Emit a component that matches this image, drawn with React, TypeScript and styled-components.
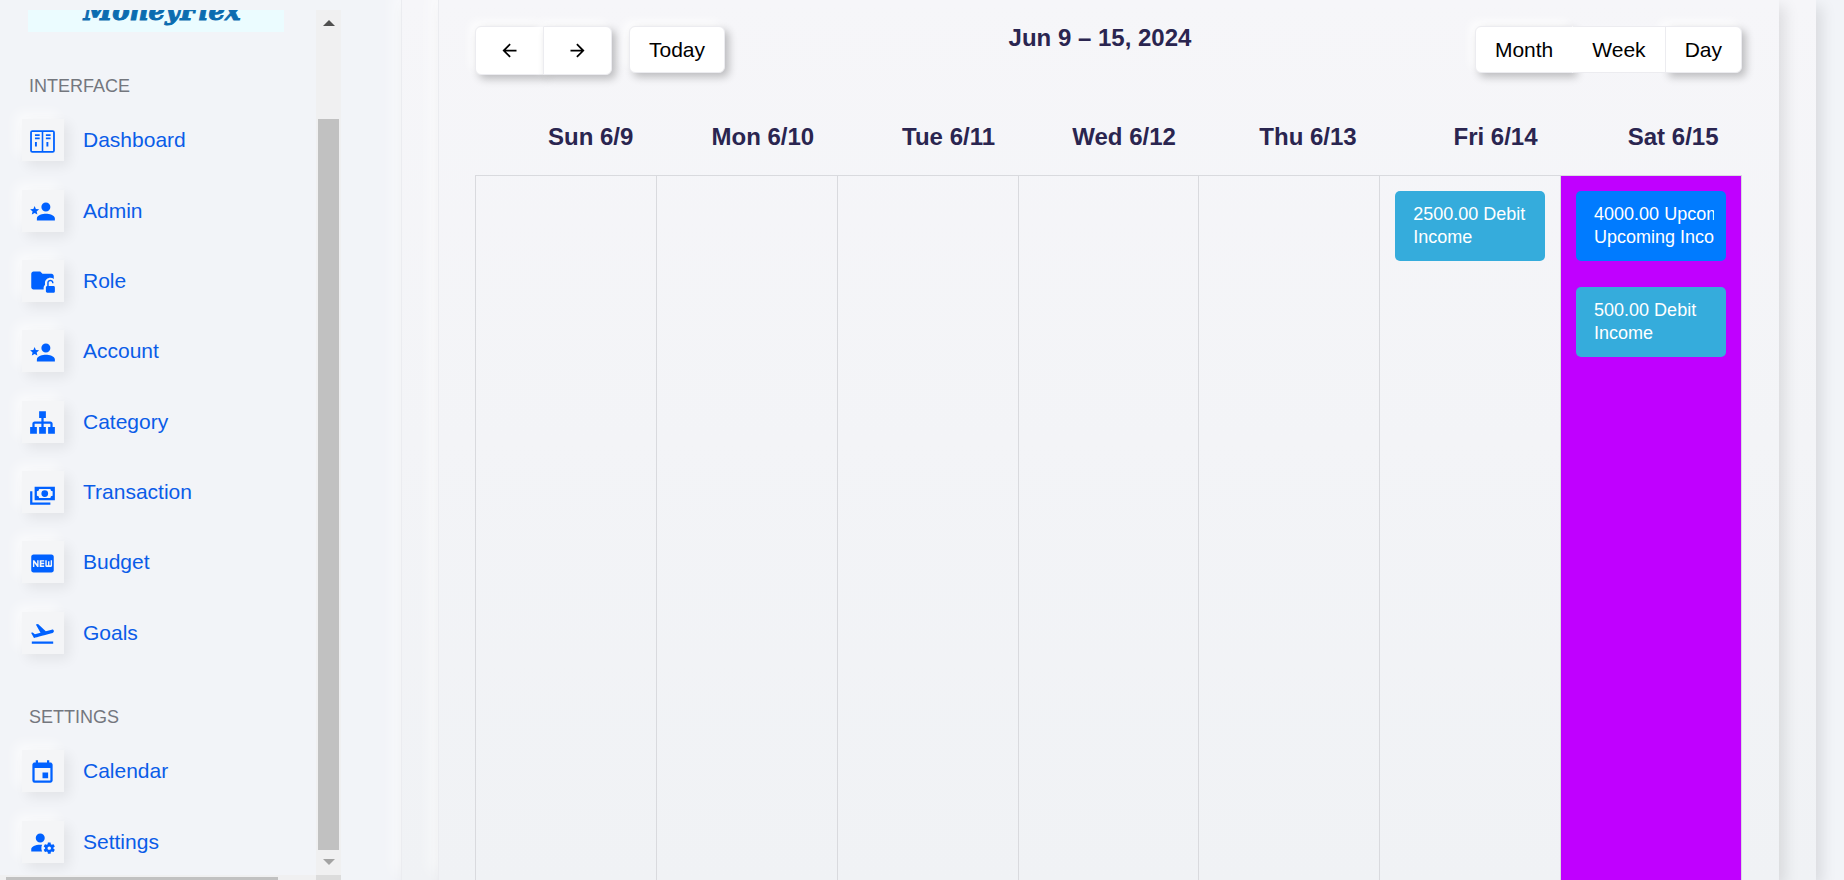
import React from "react";
import styled, { createGlobalStyle, css } from "styled-components";
import { MdArrowBack, MdArrowForward, MdEvent, MdFiberNew, MdFlightTakeoff } from "react-icons/md";

const GlobalStyle = createGlobalStyle`
  *, *::before, *::after { box-sizing: border-box; }
  body {
    margin: 0;
    background: #f2f4f8;
    color: #2a2550;
    font-family: "Liberation Sans", Arial, sans-serif;
    overflow: hidden;
  }
`;

const Page = styled.div`
  display: flex;
  height: 100vh;
  overflow: hidden;
`;

/* ---------- Sidebar ---------- */

const Sidebar = styled.aside`
  flex: none;
  width: 341px;
  padding-top: 10px;
  display: grid;
  grid-template-columns: minmax(0, 1fr) 25px;
  grid-template-rows: minmax(0, 1fr) 5px;
`;

const SidebarContent = styled.div`
  overflow: hidden;
  display: flex;
  flex-direction: column;
`;

const Logo = styled.a`
  flex: none;
  display: flex;
  align-items: flex-end;
  justify-content: center;
  width: 256px;
  height: 22px;
  margin: 0 0 42px 28px;
  padding-right: 12px;
  padding-left: 24px;
  overflow: hidden;
  background: #ebfcff;
  color: #0b6cb0;
  font: italic bold 26px/42px "DejaVu Serif", serif;
  -webkit-text-stroke: 1px #0b6cb0;
  text-decoration: none;
`;

const SectionTitle = styled.h2`
  flex: none;
  margin: 0;
  padding: 0 29px;
  color: #74777e;
  font-size: 18px;
  font-weight: 400;
  line-height: 24px;
  text-transform: uppercase;
`;

const NavList = styled.ul<{ $height: number }>`
  flex: none;
  display: grid;
  grid-auto-rows: 1fr;
  min-height: ${(p) => p.$height}px;
  margin: 7px 0 37px;
  padding: 0 0 0 22px;
  list-style: none;
`;

const NavLink = styled.a`
  display: flex;
  align-items: center;
  gap: 19px;
  height: 100%;
  color: #0a5ce8;
  font-size: 21px;
  text-decoration: none;
`;

const IconTile = styled.span`
  display: flex;
  align-items: center;
  justify-content: center;
  width: 42px;
  height: 42px;
  padding: 2px 2px 0 0;
  background: #f4f5f7;
  box-shadow: 5px 5px 12px rgba(0, 0, 0, 0.07), -6px -6px 12px rgba(255, 255, 255, 0.7);
  color: #0061ff;

  svg {
    width: 27px;
    height: 27px;
    fill: currentColor;
  }
`;

const VerticalBar = styled.div`
  display: flex;
  flex-direction: column;
  align-items: center;
  padding: 10px 0;
  background: #f0f0f1;
`;

const BarArrow = styled.span<{ $down?: boolean }>`
  width: 0;
  height: 0;
  border: 6px solid transparent;
  ${(p) =>
    p.$down
      ? css`border-top-color: #a3a3a3; border-bottom-width: 0;`
      : css`border-bottom-color: #505050; border-top-width: 0;`}
`;

const VerticalThumb = styled.div`
  flex: 1;
  width: 21px;
  margin: 93px 0 9px;
  background: #c1c1c1;
`;

const HorizontalBar = styled.div`
  padding: 2px 38px 0 6px;
  background: #f0f0f1;
`;

const HorizontalThumb = styled.div`
  height: 3px;
  background: #c1c1c1;
`;

const BarCorner = styled.div`
  background: #dcdcdc;
`;

/* ---------- Calendar ---------- */

const panel = css`
  background: linear-gradient(#f6f6f9, #f0f2f5);
  box-shadow: 6px 6px 14px rgba(0, 0, 0, 0.1), -8px -8px 14px rgba(255, 255, 255, 0.55);
`;

const Main = styled.main`
  flex: 1;
  min-width: 0;
  display: flex;
  padding: 0 28px 0 60px;
`;

const OuterCard = styled.div`
  flex: 1;
  min-width: 0;
  display: flex;
  padding: 0 37px 0 36px;
  border-left: 1px solid #ebecf0;
  ${panel}
`;

const CalendarCard = styled.section`
  flex: 1;
  min-width: 0;
  display: flex;
  flex-direction: column;
  padding: 26px 37px 0 36px;
  border-left: 1px solid #ebecf0;
  ${panel}
`;

const Toolbar = styled.header`
  display: flex;
  align-items: flex-start;
  justify-content: space-between;
  min-height: 82px;
`;

const ToolbarSide = styled.div`
  display: flex;
  align-items: flex-start;
  gap: 17px;
`;

const ButtonGroup = styled.div`
  display: flex;
`;

const Title = styled.h1`
  margin: 0;
  font-size: 24px;
  line-height: 24px;
`;

const Button = styled.button<{ $icon?: boolean; $active?: boolean }>`
  position: relative;
  z-index: ${(p) => (p.$active ? 1 : 0)};
  display: flex;
  align-items: center;
  height: ${(p) => (p.$icon ? 49 : 47)}px;
  padding: 0 ${(p) => (p.$icon ? 23 : 19)}px;
  border: 1px solid #ececf0;
  background: #fff;
  color: #000;
  font: 21px "Liberation Sans", Arial, sans-serif;
  box-shadow: 4px 4px 8px rgba(0, 0, 0, 0.24), -5px -5px 10px rgba(255, 255, 255, 0.8);

  &:first-child { border-radius: 6px 0 0 6px; }
  &:last-child { border-radius: 0 6px 6px 0; }
  &:only-child { border-radius: 6px; }
  & + & { margin-left: -1px; }

  ${(p) => p.$active && css`border-left-color: #fff; box-shadow: none;`}

  svg { width: 21px; height: 21px; }
`;

const WeekTable = styled.table`
  flex: 1;
  width: 100%;
  table-layout: fixed;
  border-collapse: collapse;
`;

const DayHeading = styled.th`
  height: 67px;
  padding: 0 23px 8px 0;
  border-bottom: 1px solid #d9dade;
  font-size: 24px;
  line-height: 28px;
  text-align: right;
`;

const DayCell = styled.td<{ $today?: boolean }>`
  height: 740px;
  padding: 15px;
  border: 1px solid #d9dade;
  vertical-align: top;
  ${(p) => p.$today && css`background: #c000ff; border-left-color: #c000ff;`}
`;

const EventLink = styled.a<{ $upcoming?: boolean }>`
  display: block;
  padding: 12px 12px 12px 18px;
  border-radius: 5px;
  background: ${(p) => (p.$upcoming ? "#007bff" : "#35acdc")};
  color: #fff;
  font-size: 18px;
  line-height: 23px;
  text-decoration: none;

  & + & { margin-top: 26px; }
`;

const EventLine = styled.span`
  display: block;
  overflow: hidden;
  white-space: nowrap;
`;

/* ---------- Icons ---------- */

const ReaderIcon = () => (
  <svg viewBox="0 0 24 24" aria-hidden="true">
    <path
      fillRule="evenodd"
      d="M3 2H21A2 2 0 0 1 23 4V20A2 2 0 0 1 21 22H3A2 2 0 0 1 1 20V4A2 2 0 0 1 3 2M2.600 3.600V20.400H11.300V3.600H2.600M12.700 3.600V20.400H21.400V3.600H12.700M5.300 5.500H9.500V7H5.300V5.500M5.300 8.500H9.500V10H5.300V8.500M5.300 12.500H7V16.500H5.300V12.500M15 5.500H19.200V7H15V5.500M15 8.500H19.200V10H15V8.500M15.500 12.500H17.200V16.500H15.500V12.500Z"
    />
  </svg>
);

const PersonStarIcon = () => (
  <svg viewBox="0 0 24 24" aria-hidden="true">
    <path d="M15,14C12.3,14 7,15.3 7,18V20H23V18C23,15.3 17.7,14 15,14M15,12A4,4 0 0,0 19,8A4,4 0 0,0 15,4A4,4 0 0,0 11,8A4,4 0 0,0 15,12M5,13.28L7.45,14.77L6.8,11.96L9,10.08L6.11,9.83L5,7.19L3.87,9.83L1,10.08L3.18,11.96L2.5,14.77L5,13.28Z" />
  </svg>
);

const FolderLockIcon = () => (
  <svg viewBox="0 0 24 24" aria-hidden="true">
    <path d="M4 3C2.900 3 2 3.900 2 5V17C2 18.100 2.900 19 4 19H13V17.500C13 16.500 13.500 15.600 14.200 15V13C14.200 10.500 16.500 8.600 19 8.600C20.200 8.600 21.200 9 22 9.700V7C22 5.900 21.100 5 20 5H12L10 3H4Z" />
    <path d="M22 16H17.500V13C17.500 12.200 18.200 11.700 19 11.700S20.500 12.200 20.500 13V13.500H21.800V13C21.800 11.600 20.400 10.500 19 10.500S16.200 11.600 16.200 13V16C15.600 16 15 16.600 15 17.200V20.700C15 21.400 15.600 22 16.200 22H21.700C22.400 22 23 21.400 23 20.800V17.300C23 16.600 22.500 16 22 16Z" />
  </svg>
);

const SitemapIcon = () => (
  <svg viewBox="0 0 24 24" aria-hidden="true">
    <path d="M9,2V8H11V11H5C3.89,11 3,11.89 3,13V16H1V22H7V16H5V13H11V16H9V22H15V16H13V13H19V16H17V22H23V16H21V13C21,11.89 20.11,11 19,11H13V8H15V2H9Z" />
  </svg>
);

const CashIcon = () => (
  <svg viewBox="0 0 24 24" aria-hidden="true">
    <path d="M5,6H23V18H5V6M14,9A3,3 0 0,1 17,12A3,3 0 0,1 14,15A3,3 0 0,1 11,12A3,3 0 0,1 14,9M9,8A2,2 0 0,1 7,10V14A2,2 0 0,1 9,16H19A2,2 0 0,1 21,14V10A2,2 0 0,1 19,8H9M1,10H3V20H19V22H1V10Z" />
  </svg>
);

const PersonCogIcon = () => (
  <svg viewBox="0 0 24 24" aria-hidden="true">
    <path d="M10 4A4 4 0 0 0 6 8A4 4 0 0 0 10 12A4 4 0 0 0 14 8A4 4 0 0 0 10 4M17 12C16.87 12 16.76 12.09 16.74 12.21L16.55 13.53C16.25 13.66 15.96 13.82 15.7 14L14.46 13.5C14.35 13.5 14.22 13.5 14.15 13.63L13.15 15.36C13.09 15.47 13.11 15.6 13.21 15.68L14.27 16.5C14.25 16.67 14.24 16.83 14.24 17C14.24 17.17 14.25 17.33 14.27 17.5L13.21 18.32C13.12 18.4 13.09 18.53 13.15 18.64L14.15 20.37C14.21 20.5 14.34 20.5 14.46 20.5L15.7 20C15.96 20.18 16.24 20.35 16.55 20.47L16.74 21.79C16.76 21.91 16.86 22 17 22H19C19.11 22 19.22 21.91 19.24 21.79L19.43 20.47C19.73 20.34 20 20.18 20.27 20L21.5 20.5C21.63 20.5 21.76 20.5 21.83 20.37L22.83 18.64C22.89 18.53 22.86 18.4 22.77 18.32L21.7 17.5C21.72 17.33 21.74 17.17 21.74 17C21.74 16.83 21.73 16.67 21.7 16.5L22.76 15.68C22.85 15.6 22.88 15.47 22.82 15.36L21.82 13.63C21.76 13.5 21.63 13.5 21.5 13.5L20.27 14C20 13.82 19.73 13.65 19.42 13.53L19.23 12.21C19.22 12.09 19.11 12 19 12H17M10 14C5.58 14 2 15.79 2 18V20H11.68A7 7 0 0 1 11 17A7 7 0 0 1 11.64 14.09C11.11 14.03 10.56 14 10 14M18 15.5C18.83 15.5 19.5 16.17 19.5 17C19.5 17.83 18.83 18.5 18 18.5C17.16 18.5 16.5 17.83 16.5 17C16.5 16.17 17.17 15.5 18 15.5Z" />
  </svg>
);

/* ---------- Data ---------- */

type NavItem = { label: string; icon: React.ReactNode };

const interfaceItems: NavItem[] = [
  { label: "Dashboard", icon: <ReaderIcon /> },
  { label: "Admin", icon: <PersonStarIcon /> },
  { label: "Role", icon: <FolderLockIcon /> },
  { label: "Account", icon: <PersonStarIcon /> },
  { label: "Category", icon: <SitemapIcon /> },
  { label: "Transaction", icon: <CashIcon /> },
  { label: "Budget", icon: <MdFiberNew /> },
  { label: "Goals", icon: <MdFlightTakeoff /> },
];

const settingsItems: NavItem[] = [
  { label: "Calendar", icon: <MdEvent /> },
  { label: "Settings", icon: <PersonCogIcon /> },
];

type CalendarEvent = { lines: string[]; upcoming?: boolean };
type Day = { label: string; today?: boolean; events: CalendarEvent[] };

const days: Day[] = [
  { label: "Sun 6/9", events: [] },
  { label: "Mon 6/10", events: [] },
  { label: "Tue 6/11", events: [] },
  { label: "Wed 6/12", events: [] },
  { label: "Thu 6/13", events: [] },
  { label: "Fri 6/14", events: [{ lines: ["2500.00 Debit", "Income"] }] },
  {
    label: "Sat 6/15",
    today: true,
    events: [
      { lines: ["4000.00 Upcoming", "Upcoming Income"], upcoming: true },
      { lines: ["500.00 Debit", "Income"] },
    ],
  },
];

const Nav = ({ items, height }: { items: NavItem[]; height: number }) => (
  <NavList $height={height}>
    {items.map((item) => (
      <li key={item.label}>
        <NavLink href="#">
          <IconTile>{item.icon}</IconTile>
          {item.label}
        </NavLink>
      </li>
    ))}
  </NavList>
);

export default function App() {
  return (
    <Page>
      <GlobalStyle />
      <Sidebar>
        <SidebarContent as="nav">
          <Logo href="#">MoneyFlex</Logo>
          <SectionTitle>Interface</SectionTitle>
          <Nav items={interfaceItems} height={563} />
          <SectionTitle>Settings</SectionTitle>
          <Nav items={settingsItems} height={141} />
        </SidebarContent>
        <VerticalBar>
          <BarArrow />
          <VerticalThumb />
          <BarArrow $down />
        </VerticalBar>
        <HorizontalBar>
          <HorizontalThumb />
        </HorizontalBar>
        <BarCorner />
      </Sidebar>
      <Main>
        <OuterCard>
          <CalendarCard>
            <Toolbar>
              <ToolbarSide>
                <ButtonGroup>
                  <Button $icon aria-label="Previous week"><MdArrowBack /></Button>
                  <Button $icon aria-label="Next week"><MdArrowForward /></Button>
                </ButtonGroup>
                <ButtonGroup>
                  <Button>Today</Button>
                </ButtonGroup>
              </ToolbarSide>
              <Title>Jun 9 – 15, 2024</Title>
              <ButtonGroup>
                <Button>Month</Button>
                <Button $active>Week</Button>
                <Button>Day</Button>
              </ButtonGroup>
            </Toolbar>
            <WeekTable>
              <thead>
                <tr>
                  {days.map((day) => (
                    <DayHeading key={day.label} scope="col">{day.label}</DayHeading>
                  ))}
                </tr>
              </thead>
              <tbody>
                <tr>
                  {days.map((day) => (
                    <DayCell key={day.label} $today={day.today}>
                      {day.events.map((event) => (
                        <EventLink key={event.lines[0]} href="#" $upcoming={event.upcoming}>
                          {event.lines.map((line) => (
                            <EventLine key={line}>{line}</EventLine>
                          ))}
                        </EventLink>
                      ))}
                    </DayCell>
                  ))}
                </tr>
              </tbody>
            </WeekTable>
          </CalendarCard>
        </OuterCard>
      </Main>
    </Page>
  );
}
